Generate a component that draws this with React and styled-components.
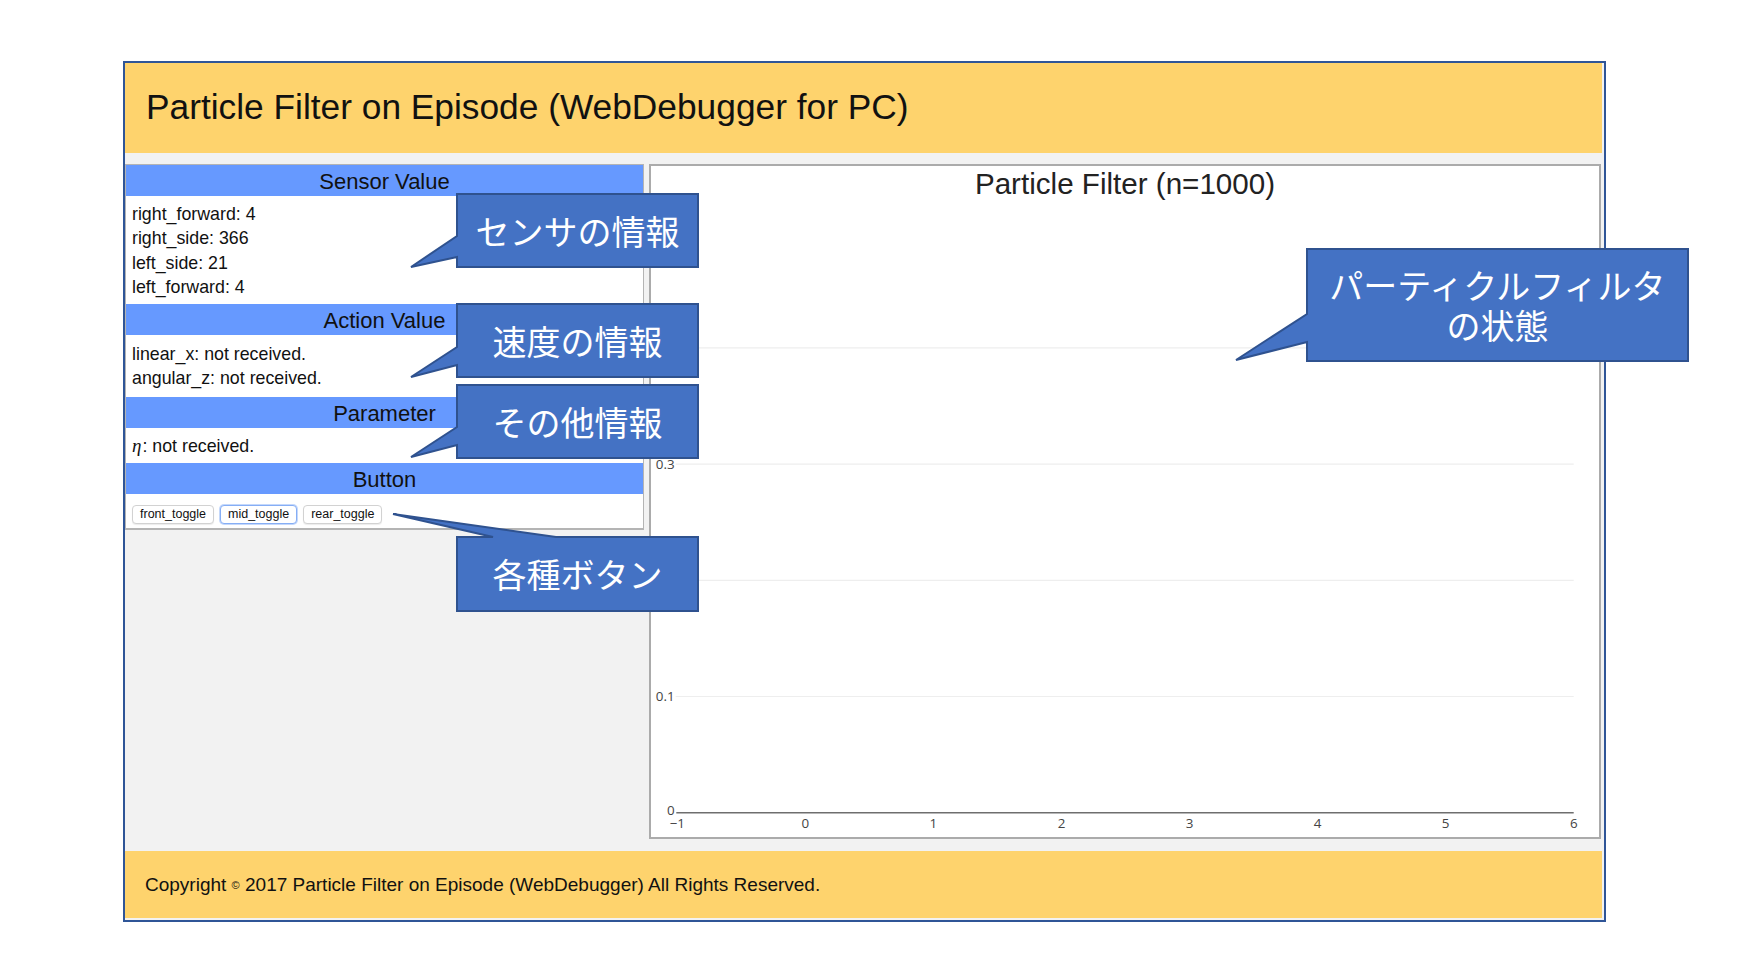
import React from 'react';
import styled, { createGlobalStyle } from 'styled-components';

const GlobalStyle = createGlobalStyle`
  html, body { margin: 0; padding: 0; background: #ffffff; }
  body { font-family: "Liberation Sans", Arial, sans-serif; color: #111; }
  * { box-sizing: border-box; }
`;

const Page = styled.div`
  position: relative;
  width: 1762px;
  height: 974px;
  padding: 61px 0 0 123px;
  overflow: hidden;
`;

const Frame = styled.div`
  box-sizing: content-box;
  width: 1479px;
  height: 857px;
  border: 2px solid #2f5597;
  background: #f2f2f2;
  display: flex;
  flex-direction: column;
`;

const Banner = styled.header`
  height: ${p => p.$h}px;
  margin-right: 2px;
  margin-top: ${p => p.$mt || 0}px;
  background: #fed36d;
  display: flex;
  align-items: center;
  padding: 0 0 ${p => p.$pb || 0}px ${p => p.$pl}px;
  flex-shrink: 0;
`;

const Title = styled.h1`
  margin: 0;
  font-size: 35.3px;
  font-weight: 400;
  color: #111;
  white-space: nowrap;
`;

const FooterText = styled.p`
  margin: 0;
  font-size: 19px;
  color: #111;
  white-space: nowrap;
`;

const Copy = styled.span`
  font-size: 11px;
  vertical-align: 2px;
`;

const Main = styled.main`
  display: flex;
  align-items: flex-start;
  gap: 5px;
  margin-top: 11px;
  padding-right: 3px;
  height: 675px;
  flex-shrink: 0;
`;

const LeftPanel = styled.section`
  width: 519px;
  border: 1px solid #b4b4b4;
  border-bottom-width: 2px;
  background: #fff;
  display: flex;
  flex-direction: column;
`;

const SectionHeader = styled.h2`
  margin: 0;
  height: 31px;
  line-height: 31px;
  padding-top: 1px;
  background: #6699ff;
  text-align: center;
  font-size: 22px;
  font-weight: 400;
  color: #111;
`;

const SectionBody = styled.div`
  padding: ${p => p.$pt || 6}px 6px ${p => p.$pb || 5}px 6px;
  font-size: 17.8px;
  line-height: 24.3px;
  color: #111;
  display: ${p => (p.$row ? 'flex' : 'block')};
  gap: 6px;
`;

const Line = styled.div`
  white-space: nowrap;
`;

const Eta = styled.i`
  font-family: "Liberation Serif", "Times New Roman", serif;
  font-size: 19px;
  margin-right: 1px;
`;

const ToggleButton = styled.button`
  height: 19px;
  padding: 0 7px;
  font-family: "Liberation Sans", Arial, sans-serif;
  font-size: 12.5px;
  color: #111;
  background: #fff;
  border: 1px solid ${p => (p.$active ? '#86aef5' : '#d2d2d2')};
  border-radius: 4px;
  box-shadow: ${p => (p.$active ? '0 0 0 1px #c4d8fb' : '0 1px 1px rgba(0,0,0,0.08)')};
  line-height: 17px;
`;

const ChartPanel = styled.section`
  width: 952px;
  height: 675px;
  border: 2px solid #ababab;
  background: #fff;
  display: flex;
  flex-direction: column;
`;

const ChartTitle = styled.div`
  height: 36px;
  line-height: 36px;
  text-align: center;
  font-size: 29.6px;
  color: #222;
`;

const ChartSvg = styled.svg`
  display: block;
  width: 948px;
  height: 635px;
`;

const Overlay = styled.div`
  position: absolute;
  left: 0;
  top: 0;
  width: 1762px;
  height: 974px;
  pointer-events: none;
`;

const OverlaySvg = styled.svg`
  position: absolute;
  left: 0;
  top: 0;
`;

const CalloutLabel = styled.div`
  position: absolute;
  left: ${p => p.$x}px;
  top: ${p => p.$y}px;
  width: ${p => p.$w}px;
  height: ${p => p.$h}px;
  display: flex;
  align-items: center;
  justify-content: center;
  text-align: center;
  color: #fff;
  font-family: "Noto Sans CJK JP", "Noto Sans", sans-serif;
  font-size: 34px;
  line-height: 40px;
  white-space: nowrap;
`;

const callouts = [
  { x: 457, y: 194, w: 241, h: 73, lines: ['センサの情報'], d: 'M457,194 H698 V267 H457 V257 L411,267 L457,236 Z' },
  { x: 457, y: 304, w: 241, h: 73, lines: ['速度の情報'], d: 'M457,304 H698 V377 H457 V365 L411,377 L457,347 Z' },
  { x: 457, y: 385, w: 241, h: 73, lines: ['その他情報'], d: 'M457,385 H698 V458 H457 V445 L411,457 L457,427 Z' },
  { x: 457, y: 537, w: 241, h: 74, lines: ['各種ボタン'], d: 'M457,537 H493 L393,514 L556,537 H698 V611 H457 Z' },
  { x: 1307, y: 249, w: 381, h: 112, lines: ['パーティクルフィルタ', 'の状態'], d: 'M1307,249 H1688 V361 H1307 V342 L1236,360 L1307,314 Z' },
];

const X0 = 26.3;
const XS = 128.06;
const Y0 = 610.7;
const YS = 116.2;
const xTicks = [-1, 0, 1, 2, 3, 4, 5, 6];
const gridTicks = [1, 2, 3, 4];
const yLabels = [0, 1, 3];

function Chart() {
  return (
    <ChartSvg viewBox="0 0 948 635">
      {gridTicks.map(t => (
        <line key={t} x1={24.7} x2={922.7} y1={Y0 - t * YS} y2={Y0 - t * YS} stroke="#eeeeee" strokeWidth="1.2" />
      ))}
      <line x1={X0 - 1} x2={922.7} y1={Y0} y2={Y0} stroke="#6e6e6e" strokeWidth="1.6" />
      {yLabels.map(t => (
        <text key={t} x={23.6} y={Y0 - t * YS + (t === 0 ? 2 : 4.6)} textAnchor="end" fontFamily="Open Sans, sans-serif" fontSize="13.4" fill="#444">
          {t === 0 ? '0' : `0.${t}`}
        </text>
      ))}
      {xTicks.map(t => (
        <text key={t} x={X0 + (t + 1) * XS} y={625.5} textAnchor="middle" fontFamily="Open Sans, sans-serif" fontSize="13.4" fill="#444">
          {t < 0 ? `\u2212${-t}` : t}
        </text>
      ))}
    </ChartSvg>
  );
}

export default function App() {
  return (
    <>
      <GlobalStyle />
      <Page>
        <Frame>
          <Banner $h={90} $pl={21} $pb={2}>
            <Title>Particle Filter on Episode (WebDebugger for PC)</Title>
          </Banner>
          <Main>
            <LeftPanel>
              <SectionHeader>Sensor Value</SectionHeader>
              <SectionBody>
                <Line>right_forward: 4</Line>
                <Line>right_side: 366</Line>
                <Line>left_side: 21</Line>
                <Line>left_forward: 4</Line>
              </SectionBody>
              <SectionHeader>Action Value</SectionHeader>
              <SectionBody $pt={7} $pb={6}>
                <Line>linear_x: not received.</Line>
                <Line>angular_z: not received.</Line>
              </SectionBody>
              <SectionHeader>Parameter</SectionHeader>
              <SectionBody>
                <Line><Eta>η</Eta>: not received.</Line>
              </SectionBody>
              <SectionHeader>Button</SectionHeader>
              <SectionBody $row $pt={11} $pb={4}>
                <ToggleButton>front_toggle</ToggleButton>
                <ToggleButton $active>mid_toggle</ToggleButton>
                <ToggleButton>rear_toggle</ToggleButton>
              </SectionBody>
            </LeftPanel>
            <ChartPanel>
              <ChartTitle>Particle Filter (n=1000)</ChartTitle>
              <Chart />
            </ChartPanel>
          </Main>
          <Banner as="footer" $h={67} $pl={20} $mt={12}>
            <FooterText>
              Copyright <Copy>©</Copy> 2017 Particle Filter on Episode (WebDebugger) All Rights Reserved.
            </FooterText>
          </Banner>
        </Frame>
        <Overlay>
          <OverlaySvg width="1762" height="974" viewBox="0 0 1762 974">
            {callouts.map((c, i) => (
              <path key={i} d={c.d} fill="#4472c4" stroke="#2f528f" strokeWidth="2" strokeLinejoin="miter" />
            ))}
          </OverlaySvg>
          {callouts.map((c, i) => (
            <CalloutLabel key={i} $x={c.x} $y={c.y} $w={c.w} $h={c.h}>
              <span>
                {c.lines.map((l, j) => (
                  <React.Fragment key={l}>
                    {j > 0 && <br />}
                    {l}
                  </React.Fragment>
                ))}
              </span>
            </CalloutLabel>
          ))}
        </Overlay>
      </Page>
    </>
  );
}
